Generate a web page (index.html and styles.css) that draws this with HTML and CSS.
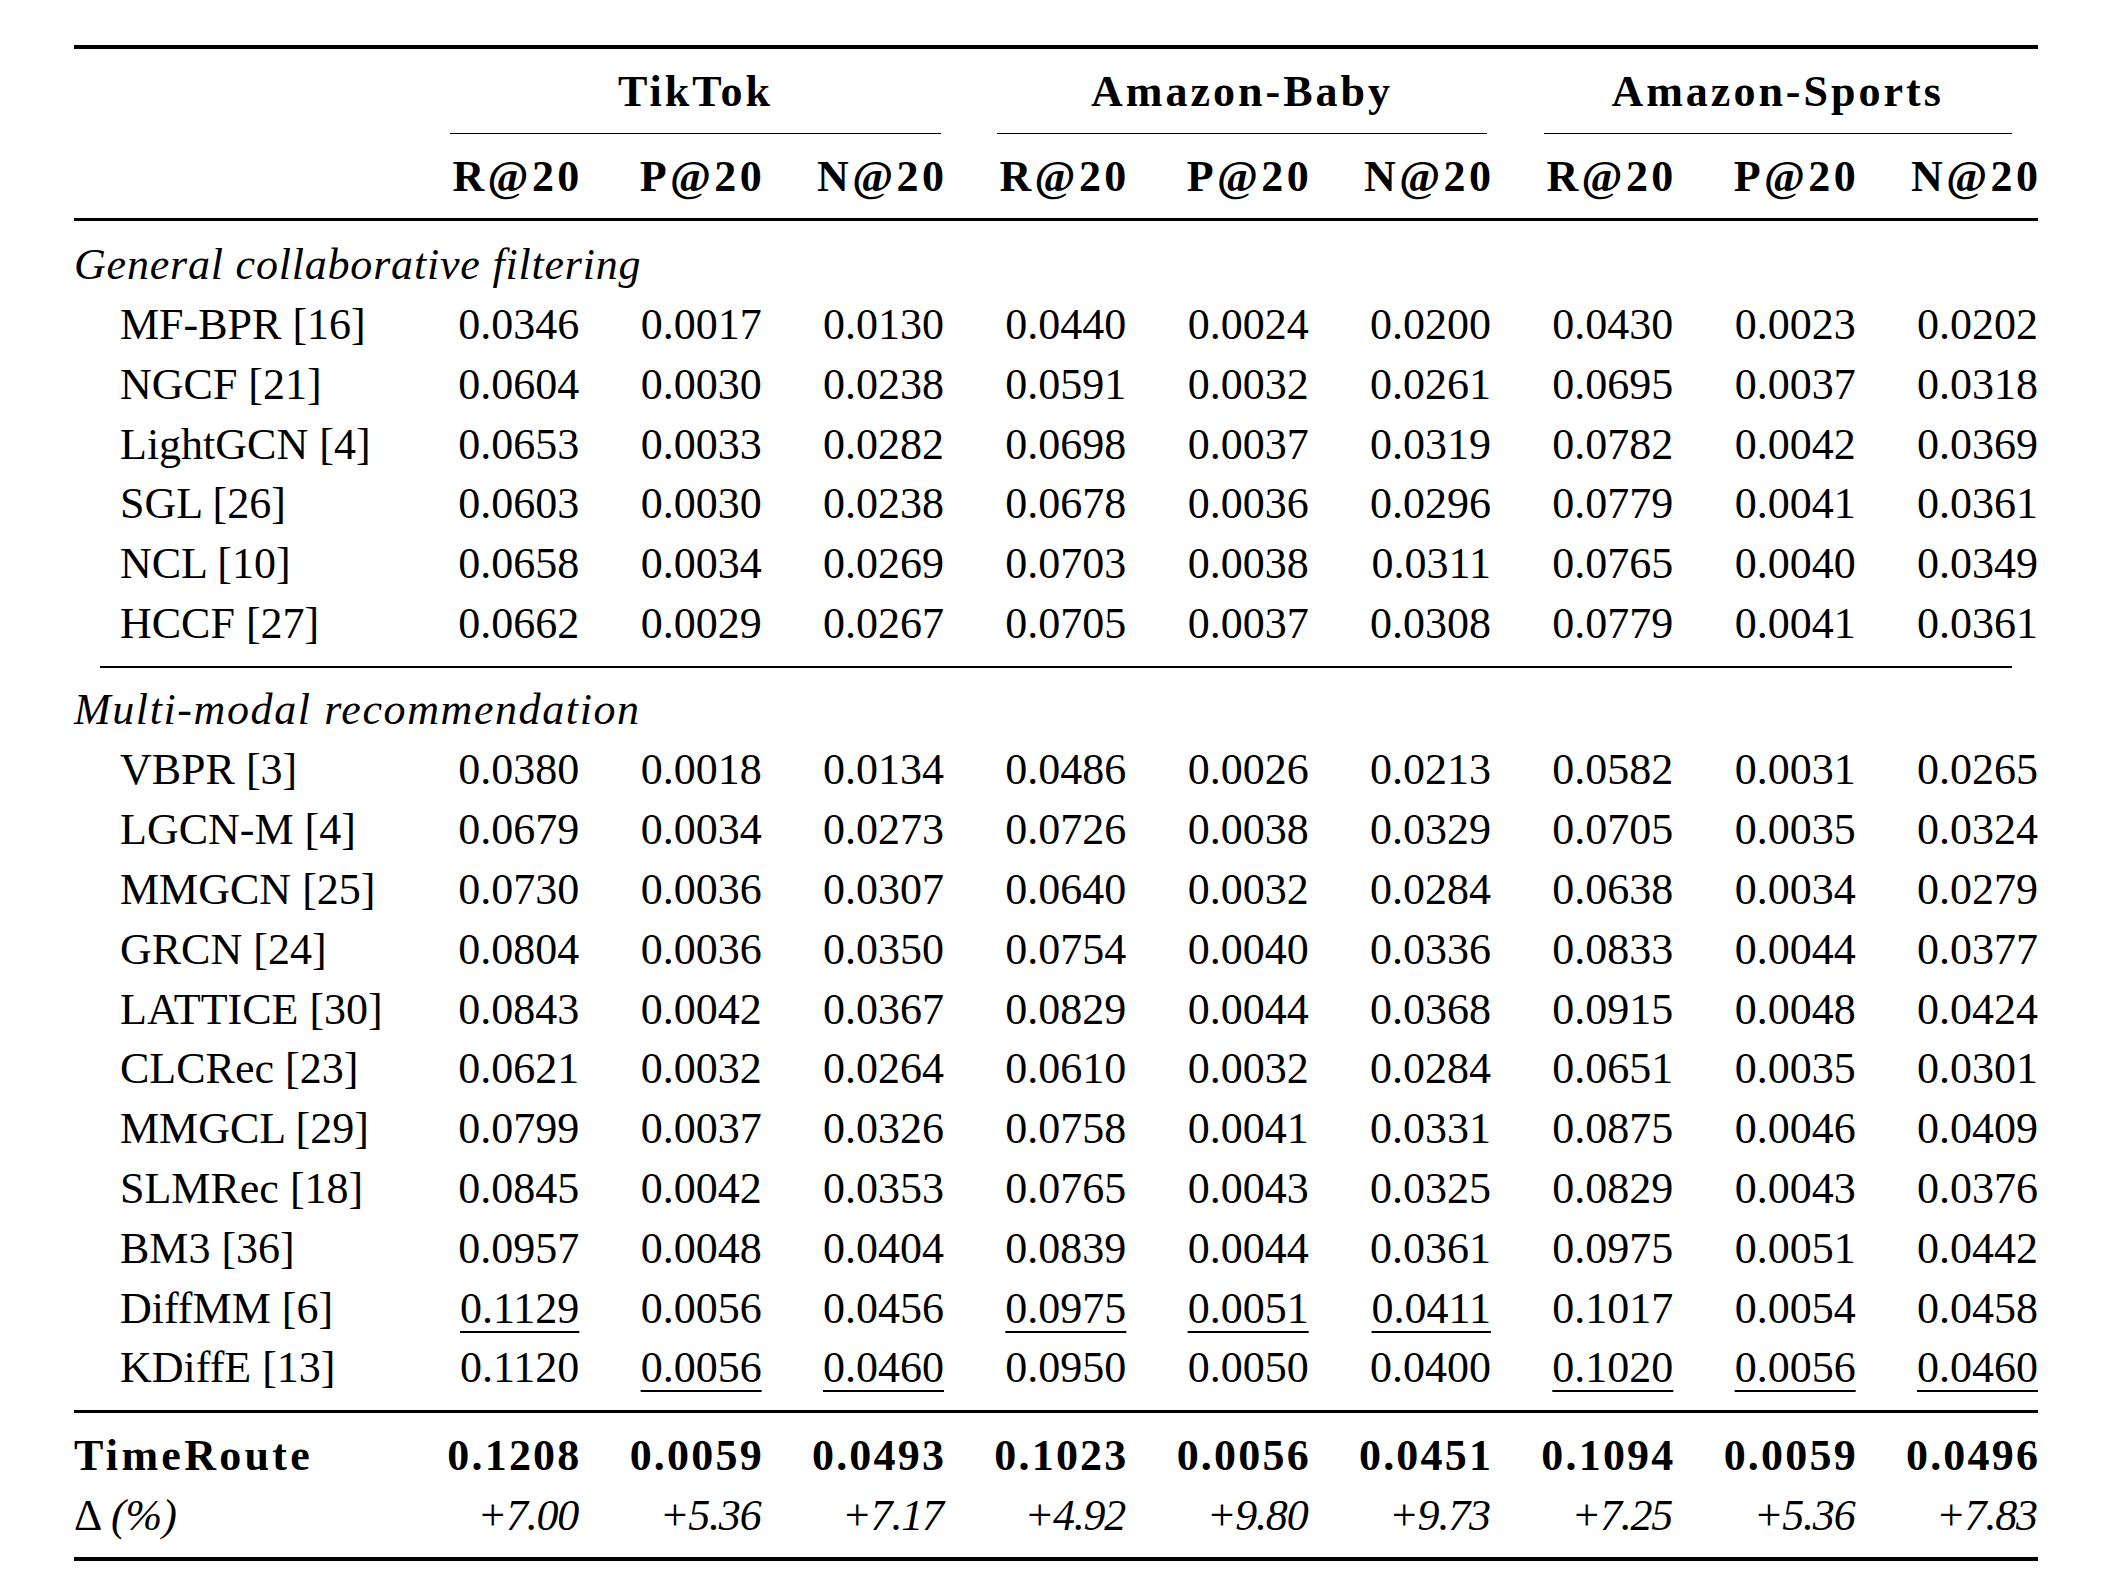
FILE: index.html
```html
<!DOCTYPE html>
<html lang="en">
<head>
    <meta charset="UTF-8">
    <title>Performance comparison</title>
    <link rel="stylesheet" href="styles.css">
</head>
<body>
    <div class="results">
        <div class="rule heavy"></div>

        <div class="row groups">
            <div class="group tiktok">TikTok</div>
            <div class="group baby">Amazon-Baby</div>
            <div class="group sports">Amazon-Sports</div>
        </div>

        <div class="row metrics">
            <div class="label"></div>
            <div>R@20</div><div>P@20</div><div>N@20</div>
            <div>R@20</div><div>P@20</div><div>N@20</div>
            <div>R@20</div><div>P@20</div><div>N@20</div>
        </div>

        <div class="rule mid after-head"></div>

        <div class="category first">General collaborative filtering</div>
        <div class="row"><div class="label method">MF-BPR [16]</div><div>0.0346</div><div>0.0017</div><div>0.0130</div><div>0.0440</div><div>0.0024</div><div>0.0200</div><div>0.0430</div><div>0.0023</div><div>0.0202</div></div>
        <div class="row"><div class="label method">NGCF [21]</div><div>0.0604</div><div>0.0030</div><div>0.0238</div><div>0.0591</div><div>0.0032</div><div>0.0261</div><div>0.0695</div><div>0.0037</div><div>0.0318</div></div>
        <div class="row"><div class="label method">LightGCN [4]</div><div>0.0653</div><div>0.0033</div><div>0.0282</div><div>0.0698</div><div>0.0037</div><div>0.0319</div><div>0.0782</div><div>0.0042</div><div>0.0369</div></div>
        <div class="row"><div class="label method">SGL [26]</div><div>0.0603</div><div>0.0030</div><div>0.0238</div><div>0.0678</div><div>0.0036</div><div>0.0296</div><div>0.0779</div><div>0.0041</div><div>0.0361</div></div>
        <div class="row"><div class="label method">NCL [10]</div><div>0.0658</div><div>0.0034</div><div>0.0269</div><div>0.0703</div><div>0.0038</div><div>0.0311</div><div>0.0765</div><div>0.0040</div><div>0.0349</div></div>
        <div class="row"><div class="label method">HCCF [27]</div><div>0.0662</div><div>0.0029</div><div>0.0267</div><div>0.0705</div><div>0.0037</div><div>0.0308</div><div>0.0779</div><div>0.0041</div><div>0.0361</div></div>

        <div class="rule light partial"></div>

        <div class="category second-group">Multi-modal recommendation</div>
        <div class="row"><div class="label method">VBPR [3]</div><div>0.0380</div><div>0.0018</div><div>0.0134</div><div>0.0486</div><div>0.0026</div><div>0.0213</div><div>0.0582</div><div>0.0031</div><div>0.0265</div></div>
        <div class="row"><div class="label method">LGCN-M [4]</div><div>0.0679</div><div>0.0034</div><div>0.0273</div><div>0.0726</div><div>0.0038</div><div>0.0329</div><div>0.0705</div><div>0.0035</div><div>0.0324</div></div>
        <div class="row"><div class="label method">MMGCN [25]</div><div>0.0730</div><div>0.0036</div><div>0.0307</div><div>0.0640</div><div>0.0032</div><div>0.0284</div><div>0.0638</div><div>0.0034</div><div>0.0279</div></div>
        <div class="row"><div class="label method">GRCN [24]</div><div>0.0804</div><div>0.0036</div><div>0.0350</div><div>0.0754</div><div>0.0040</div><div>0.0336</div><div>0.0833</div><div>0.0044</div><div>0.0377</div></div>
        <div class="row"><div class="label method">LATTICE [30]</div><div>0.0843</div><div>0.0042</div><div>0.0367</div><div>0.0829</div><div>0.0044</div><div>0.0368</div><div>0.0915</div><div>0.0048</div><div>0.0424</div></div>
        <div class="row"><div class="label method">CLCRec [23]</div><div>0.0621</div><div>0.0032</div><div>0.0264</div><div>0.0610</div><div>0.0032</div><div>0.0284</div><div>0.0651</div><div>0.0035</div><div>0.0301</div></div>
        <div class="row"><div class="label method">MMGCL [29]</div><div>0.0799</div><div>0.0037</div><div>0.0326</div><div>0.0758</div><div>0.0041</div><div>0.0331</div><div>0.0875</div><div>0.0046</div><div>0.0409</div></div>
        <div class="row"><div class="label method">SLMRec [18]</div><div>0.0845</div><div>0.0042</div><div>0.0353</div><div>0.0765</div><div>0.0043</div><div>0.0325</div><div>0.0829</div><div>0.0043</div><div>0.0376</div></div>
        <div class="row"><div class="label method">BM3 [36]</div><div>0.0957</div><div>0.0048</div><div>0.0404</div><div>0.0839</div><div>0.0044</div><div>0.0361</div><div>0.0975</div><div>0.0051</div><div>0.0442</div></div>
        <div class="row"><div class="label method">DiffMM [6]</div><div><span class="second">0.1129</span></div><div>0.0056</div><div>0.0456</div><div><span class="second">0.0975</span></div><div><span class="second">0.0051</span></div><div><span class="second">0.0411</span></div><div>0.1017</div><div>0.0054</div><div>0.0458</div></div>
        <div class="row"><div class="label method">KDiffE [13]</div><div>0.1120</div><div><span class="second">0.0056</span></div><div><span class="second">0.0460</span></div><div>0.0950</div><div>0.0050</div><div>0.0400</div><div><span class="second">0.1020</span></div><div><span class="second">0.0056</span></div><div><span class="second">0.0460</span></div></div>

        <div class="rule mid before-ours"></div>

        <div class="row ours"><div class="label">TimeRoute</div><div>0.1208</div><div>0.0059</div><div>0.0493</div><div>0.1023</div><div>0.0056</div><div>0.0451</div><div>0.1094</div><div>0.0059</div><div>0.0496</div></div>
        <div class="row gain"><div class="label">Δ <i>(%)</i></div><div>+7.00</div><div>+5.36</div><div>+7.17</div><div>+4.92</div><div>+9.80</div><div>+9.73</div><div>+7.25</div><div>+5.36</div><div>+7.83</div></div>

        <div class="rule heavy bottom"></div>
    </div>
</body>
</html>
```

FILE: styles.css
```css
* {
    margin: 0;
    padding: 0;
    box-sizing: border-box;
}

body {
    background: #fff;
    color: #000;
    font-family: 'Liberation Serif', 'Times New Roman', serif;
    font-size: 44px;
    padding-top: 45px;
}

.results {
    width: 1964px;
    margin-left: 74px;
}

/* booktabs style rules */
.rule {
    background: #000;
}

.rule.heavy {
    height: 4px;
}

.rule.mid {
    height: 3px;
}

.rule.light {
    height: 1.5px;
}

.rule.after-head {
    margin-top: 11px;
}

.rule.partial {
    margin: 12.5px 26px 0 26px;
}

.rule.before-ours {
    margin-top: 11.5px;
}

.rule.bottom {
    margin-top: 10.8px;
}

.row {
    display: grid;
    grid-template-columns: 323px repeat(9, 1fr);
    line-height: 59.8px;
    white-space: nowrap;
}

.row > div {
    text-align: right;
}

.row > .label {
    text-align: left;
}

.row > .method {
    padding-left: 46px;
}

/* dataset headings with trimmed rules underneath */
.groups {
    margin-top: 13px;
    font-weight: bold;
    letter-spacing: 3px;
}

.group {
    grid-column: span 3;
    text-align: center !important;
    padding-bottom: 11.5px;
    border-bottom: 1.5px solid #000;
}

.group.tiktok {
    grid-column: 2 / span 3;
    margin: 0 3px 0 53px;
}

.group.baby {
    margin: 0 4px 0 53px;
}

.group.sports {
    margin: 0 26.3px 0 52.5px;
}

.metrics {
    margin-top: 13px;
    font-weight: bold;
    letter-spacing: 3.4px;
}

.metrics > div {
    margin-right: -3.4px;
}

.category {
    font-style: italic;
    line-height: 60px;
    margin-top: 12.5px;
}

.category.first {
    margin-top: 14px;
    letter-spacing: 0.8px;
}

.category.second-group {
    letter-spacing: 1.6px;
}

.second {
    text-decoration: underline;
    text-decoration-thickness: 2.3px;
    text-underline-offset: 8px;
}

.ours {
    margin-top: 13.5px;
    font-weight: bold;
    letter-spacing: 2.2px;
}

.ours > div {
    margin-right: -2.2px;
}

.ours > .label {
    letter-spacing: 3.3px;
}

.gain > div {
    font-style: italic;
    letter-spacing: -1.2px;
    margin-right: 1.2px;
}

.gain > .label {
    font-style: normal;
    letter-spacing: 0;
    margin-right: 0;
}
```
